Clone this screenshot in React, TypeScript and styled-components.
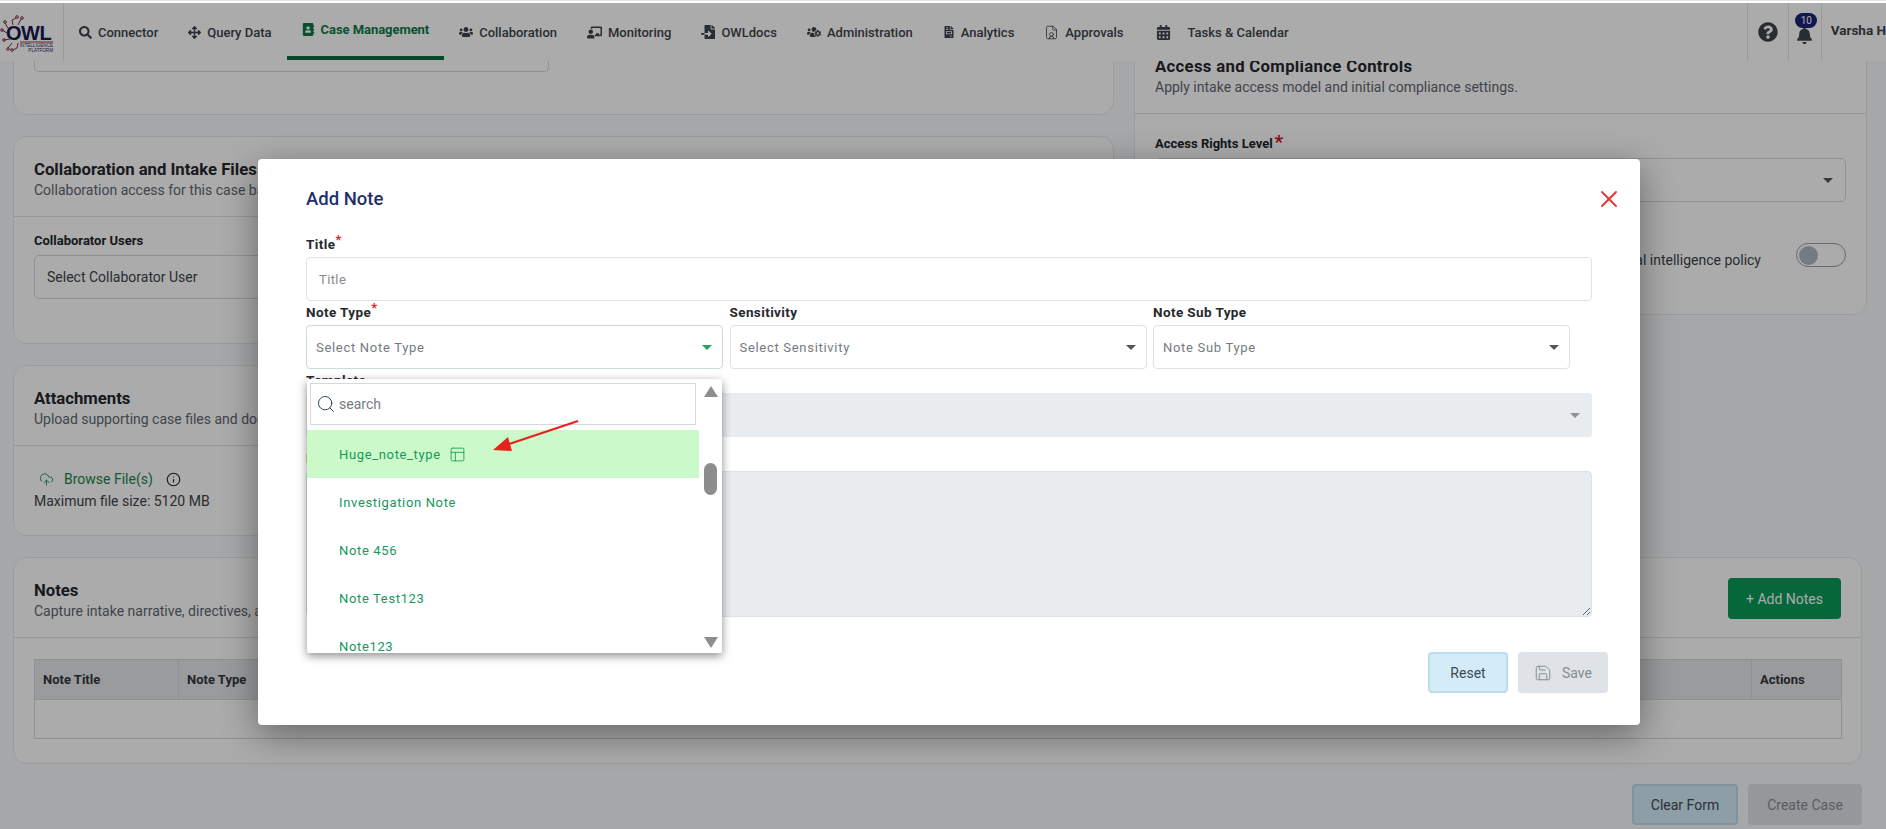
import React from "react";
import styled, { createGlobalStyle } from "styled-components";
import {
  FaAddressBook,
  FaArrowsAlt,
  FaBell,
  FaCalendarAlt,
  FaChalkboardTeacher,
  FaFileImport,
  FaFileInvoice,
  FaQuestionCircle,
  FaSearch,
  FaUsers,
  FaUsersCog,
} from "react-icons/fa";
import { CloudUpload, FileUser, Info, PanelsTopLeft, Save, Search, X } from "lucide-react";

const NAV_ITEMS = [
  { label: "Connector", icon: <FaSearch size={13} /> },
  { label: "Query Data", icon: <FaArrowsAlt size={13} /> },
  { label: "Case Management", icon: <FaAddressBook size={13} />, active: true },
  { label: "Collaboration", icon: <FaUsers size={14} /> },
  { label: "Monitoring", icon: <FaChalkboardTeacher size={15} /> },
  { label: "OWLdocs", icon: <FaFileImport size={14} /> },
  { label: "Administration", icon: <FaUsersCog size={14} /> },
  { label: "Analytics", icon: <FaFileInvoice size={12} /> },
  { label: "Approvals", icon: <FileUser size={15} strokeWidth={1.3} /> },
  { label: "Tasks & Calendar", icon: <FaCalendarAlt size={15} />, wide: true },
];

const NOTE_TYPES = ["Huge_note_type", "Investigation Note", "Note 456", "Note Test123", "Note123"];

const Logo = () => (
  <svg width="62" height="58" viewBox="0 0 62 58" aria-label="OWL Intelligence Platform">
    <g fill="none" stroke="#7a2b46" strokeWidth="1">
      <path d="M7 30 L2 27 M8 25 L5 20 M13 22 L12 17 L16 15 M18 22 L21 16 M10 36 L4 37 M12 40 L8 45 M18 40 L17 45 L13 47" />
      <circle cx="2" cy="27" r="1.3" />
      <circle cx="5" cy="19" r="1.3" />
      <circle cx="17" cy="14" r="1.3" />
      <circle cx="22" cy="15" r="1.3" />
      <circle cx="4" cy="37" r="1.3" />
      <circle cx="8" cy="46" r="1.3" />
      <circle cx="12" cy="47" r="1.3" />
    </g>
    <text x="6" y="37" fontFamily="Liberation Sans, sans-serif" fontWeight="700" fontSize="20" fill="#15194f" letterSpacing="-0.5">
      OWL
    </text>
    <path d="M20 39 H53" stroke="#a3344a" strokeWidth="1" />
    <text x="53" y="44" textAnchor="end" fontFamily="Liberation Sans, sans-serif" fontSize="4.6" fill="#2a2d5c">
      INTELLIGENCE
    </text>
    <text x="53" y="49" textAnchor="end" fontFamily="Liberation Sans, sans-serif" fontSize="4.6" fill="#2a2d5c">
      PLATFORM
    </text>
  </svg>
);

const App: React.FC = () => {
  return (
    <Page>
      <GlobalStyle />
      <TopStrip />
      <Header>
        <LogoCell>
          <Logo />
        </LogoCell>
        <Nav>
          {NAV_ITEMS.map((item) => (
            <NavItem key={item.label} $active={item.active} $wide={item.wide}>
              {item.icon}
              <span>{item.label}</span>
            </NavItem>
          ))}
        </Nav>
        <HeaderRight>
          <HelpCell>
            <FaQuestionCircle size={20} />
          </HelpCell>
          <BellCell>
            <FaBell size={17} />
            <Badge>10</Badge>
          </BellCell>
          <UserName>Varsha H</UserName>
        </HeaderRight>
      </Header>

      <Main>
        <Columns>
          <LeftStack>
            <TopCard>
              <ClippedField />
            </TopCard>
            <Card>
              <CardHead>
                <div>
                  <CardTitle>Collaboration and Intake Files</CardTitle>
                  <CardSub>Collaboration access for this case based on selected users.</CardSub>
                </div>
              </CardHead>
              <CollabBody>
                <FieldLabel>Collaborator Users</FieldLabel>
                <PageSelect>Select Collaborator User</PageSelect>
              </CollabBody>
            </Card>
            <Card>
              <CardHead>
                <div>
                  <CardTitle>Attachments</CardTitle>
                  <CardSub>Upload supporting case files and documents.</CardSub>
                </div>
              </CardHead>
              <AttachBody>
                <BrowseRow>
                  <CloudUpload size={15} strokeWidth={1.4} />
                  <span>Browse File(s)</span>
                  <InfoIcon>
                    <Info size={15} strokeWidth={1.8} />
                  </InfoIcon>
                </BrowseRow>
                <FileNote>Maximum file size: 5120 MB</FileNote>
              </AttachBody>
            </Card>
          </LeftStack>

          <RightCard>
            <CardHead>
              <div>
                <CardTitle $spacing={0.33}>Access and Compliance Controls</CardTitle>
                <CardSub>Apply intake access model and initial compliance settings.</CardSub>
              </div>
            </CardHead>
            <RightBody>
              <AccessLabel>
                Access Rights Level<BigStar>*</BigStar>
              </AccessLabel>
              <PageSelect>
                <span />
                <Caret />
              </PageSelect>
              <ToggleRow>
                <PolicyText>Apply operational intelligence policy</PolicyText>
                <Toggle>
                  <Knob />
                </Toggle>
              </ToggleRow>
            </RightBody>
          </RightCard>

          <NotesCard>
            <CardHead>
              <div>
                <CardTitle>Notes</CardTitle>
                <CardSub>Capture intake narrative, directives, and supporting notes.</CardSub>
              </div>
              <AddButton>+ Add Notes</AddButton>
            </CardHead>
            <NotesBody>
              <NotesTable>
                <thead>
                  <tr>
                    <Th $w={144}>Note Title</Th>
                    <Th>Note Type</Th>
                    <Th $w={90}>Actions</Th>
                  </tr>
                </thead>
                <tbody>
                  <tr>
                    <Td colSpan={3} />
                  </tr>
                </tbody>
              </NotesTable>
            </NotesBody>
          </NotesCard>
        </Columns>
        <PageActions>
          <ResetButton $width={106}>Clear Form</ResetButton>
          <MutedButton $width={114}>Create Case</MutedButton>
        </PageActions>
      </Main>

      <Overlay>
        <Modal>
          <ModalHead>
            <ModalTitle>Add Note</ModalTitle>
            <CloseButton>
              <X size={28} strokeWidth={1.6} />
            </CloseButton>
          </ModalHead>

          <Label $top={27}>
            Title<Star>*</Star>
          </Label>
          <TextInput placeholder="Title" />

          <SelectGrid>
            <Field>
              <Label>
                Note Type<Star>*</Star>
              </Label>
              <SelectBox $open>
                <span>Select Note Type</span>
                <Caret $color="#22a35f" />
              </SelectBox>
              <Dropdown>
                <DropdownList>
                  <SearchBox>
                    <Search size={20} strokeWidth={1.2} color="#2a4a5a" />
                    <span>search</span>
                  </SearchBox>
                  {NOTE_TYPES.map((name, i) => (
                    <Option key={name} $selected={i === 0}>
                      {name}
                      {i === 0 && <PanelsTopLeft size={17} strokeWidth={1.2} />}
                    </Option>
                  ))}
                </DropdownList>
                <ScrollRail>
                  <ArrowUp />
                  <Thumb />
                  <ArrowDown />
                </ScrollRail>
              </Dropdown>
            </Field>
            <Field>
              <Label>Sensitivity</Label>
              <SelectBox>
                <span>Select Sensitivity</span>
                <Caret $color="#555" />
              </SelectBox>
            </Field>
            <Field>
              <Label>Note Sub Type</Label>
              <SelectBox>
                <span>Note Sub Type</span>
                <Caret $color="#555" />
              </SelectBox>
            </Field>
          </SelectGrid>

          <Label $top={3}>Template</Label>
          <DisabledSelect>
            <Caret $color="#8b9096" />
          </DisabledSelect>

          <Label $top={13}>Description</Label>
          <NoteArea disabled />

          <ModalActions>
            <ResetButton $width={80}>Reset</ResetButton>
            <MutedButton $width={90}>
              <Save size={18} strokeWidth={1.3} />
              Save
            </MutedButton>
          </ModalActions>

          <PointerArrow width="100" height="40" viewBox="0 0 100 40">
            <path d="M92 3 L20 27" stroke="#e8211d" strokeWidth="2.2" />
            <path d="M7 32 L22 19 L26 33 Z" fill="#e8211d" />
          </PointerArrow>
        </Modal>
      </Overlay>
    </Page>
  );
};

const GlobalStyle = createGlobalStyle`
  html, body {
    margin: 0;
    padding: 0;
    height: 100%;
    overflow: hidden;
    background: #f8f9fb;
  }
  * {
    box-sizing: border-box;
  }
  body {
    font-family: Roboto, "Noto Sans", sans-serif;
    color: #212529;
  }
`;

const Page = styled.div`
  width: 1886px;
  height: 829px;
  overflow: hidden;
  position: relative;
`;

const TopStrip = styled.div`
  height: 3px;
  background: #fff;
  border-top: 1px solid #e3e3e3;
`;

const Header = styled.header`
  position: relative;
  z-index: 2;
  display: flex;
  height: 58px;
  background: #fff;
`;

const LogoCell = styled.div`
  width: 64px;
  flex: none;
  border-right: 1px solid #e4e4e4;
`;

const Nav = styled.nav`
  display: flex;
`;

const NavItem = styled.a<{ $active?: boolean; $wide?: boolean }>`
  display: flex;
  align-items: center;
  gap: ${(p) => (p.$wide ? "17px" : "6px")};
  padding: 0 15px;
  margin-left: ${(p) => (p.$wide ? "2px" : "0")};
  font-size: 13px;
  white-space: nowrap;
  color: ${(p) => (p.$active ? "#0b7a47" : "#3d4349")};
  border-bottom: ${(p) => (p.$active ? "4px solid #0b6b3f" : "0")};
  height: ${(p) => (p.$active ? "57px" : "58px")};
  font-weight: ${(p) => (p.$active ? 700 : 500)};
  letter-spacing: ${(p) => (p.$active ? "-0.05px" : "0")};
`;

const HeaderRight = styled.div`
  position: absolute;
  right: 0;
  top: 0;
  height: 100%;
  width: 139px;
  display: flex;
  color: #3d4349;
`;

const HelpCell = styled.div`
  width: 42px;
  display: flex;
  align-items: center;
  justify-content: center;
  border-left: 1px solid #e4e4e4;
`;

const BellCell = styled.div`
  position: relative;
  width: 34px;
  display: flex;
  align-items: center;
  justify-content: center;
  padding-top: 6px;
  border-left: 1px solid #e4e4e4;
  border-right: 1px solid #e4e4e4;
`;

const Badge = styled.span`
  position: absolute;
  top: 10px;
  left: 6px;
  width: 22px;
  height: 15px;
  border-radius: 8px;
  background: #1a2478;
  color: #fff;
  font-size: 10px;
  text-align: center;
  line-height: 15px;
`;

const UserName = styled.div`
  padding: 0 0 4px 9px;
  display: flex;
  align-items: center;
  font-size: 13.5px;
  font-weight: 700;
  white-space: nowrap;
`;

const Main = styled.main`
  margin-top: -28px;
  padding-left: 13px;
`;

const Columns = styled.div`
  display: grid;
  grid-template-columns: 1101px 733px;
  column-gap: 20px;
  row-gap: 21px;
  align-items: start;
`;

const LeftStack = styled.div`
  display: flex;
  flex-direction: column;
  gap: 21px;
`;

const Card = styled.section`
  background: #fff;
  border: 1px solid #e7e9ec;
  border-radius: 14px;
`;

const TopCard = styled(Card)`
  height: 82px;
  padding: 0 20px;
`;

const ClippedField = styled.div`
  width: 515px;
  height: 38px;
  border: 1px solid #d4d7da;
  border-top: 0;
  border-radius: 0 0 5px 5px;
`;

const RightCard = styled(Card)`
  height: 282px;
  border-radius: 0 0 14px 14px;
`;

const CardHead = styled.div`
  min-height: 80px;
  padding: 23px 20px 15px;
  display: flex;
  justify-content: space-between;
  align-items: flex-start;
  border-bottom: 1px solid #dfe2e5;
`;

const CardTitle = styled.div<{ $spacing?: number }>`
  font-size: 16.7px;
  font-weight: 700;
  line-height: 20px;
  letter-spacing: ${(p) => p.$spacing ?? 0}px;
  color: #24282d;
`;

const CardSub = styled.div`
  font-size: 14px;
  line-height: 20px;
  color: #5f6770;
`;

const CollabBody = styled.div`
  height: 126px;
  padding: 16px 20px 0;
`;

const FieldLabel = styled.div`
  font-size: 13px;
  font-weight: 700;
  line-height: 16px;
  margin-bottom: 6px;
`;

const PageSelect = styled.div`
  height: 44px;
  padding: 0 12px;
  border: 1px solid #d4d7da;
  border-radius: 5px;
  display: flex;
  align-items: center;
  justify-content: space-between;
  font-size: 14px;
  color: #3d4349;
`;

const AttachBody = styled.div`
  height: 89px;
  padding: 22px 20px 0;
  font-size: 14px;
  line-height: 22px;
`;

const BrowseRow = styled.div`
  display: flex;
  align-items: center;
  gap: 10px;
  padding-left: 5px;
  color: #19844f;
`;

const InfoIcon = styled.span`
  display: flex;
  margin-left: 3px;
  color: #24282d;
`;

const FileNote = styled.div`
  color: #3d4349;
`;

const RightBody = styled.div`
  padding: 21px 20px 0;
`;

const AccessLabel = styled.div`
  font-size: 13px;
  font-weight: 700;
  line-height: 18px;
  margin-bottom: 5px;
`;

const BigStar = styled.span`
  margin-left: 2px;
  color: #d20f0f;
  font-size: 19px;
  line-height: 10px;
`;

const ToggleRow = styled.div`
  display: flex;
  justify-content: flex-end;
  gap: 35px;
  margin-top: 41px;
`;

const PolicyText = styled.div`
  padding-top: 7px;
  font-size: 14px;
  line-height: 20px;
  color: #3d4349;
`;

const Toggle = styled.div`
  width: 50px;
  height: 24px;
  padding: 2px;
  border: 1px solid #9aa0a6;
  border-radius: 12px;
  background: #fff;
`;

const Knob = styled.div`
  width: 19px;
  height: 19px;
  border-radius: 50%;
  background: #b0b8c4;
`;

const NotesCard = styled(Card)`
  grid-column: 1 / -1;
  width: 1849px;
`;

const AddButton = styled.button`
  width: 113px;
  height: 41px;
  margin-top: -3px;
  border: 0;
  border-radius: 4px;
  background: #0a9a57;
  color: #fff;
  font-family: inherit;
  font-size: 14px;
`;

const NotesBody = styled.div`
  height: 125px;
  padding: 21px 19px 0 20px;
`;

const NotesTable = styled.table`
  width: 100%;
  height: 80px;
  border-collapse: collapse;
  table-layout: fixed;
  border: 1px solid #d4d7da;
`;

const Th = styled.th<{ $w?: number }>`
  height: 40px;
  width: ${(p) => (p.$w ? `${p.$w}px` : "auto")};
  padding: 0 8px;
  border-right: 1px solid #d4d7da;
  border-bottom: 1px solid #d4d7da;
  background: #e6e7ea;
  color: #33383d;
  font-size: 13px;
  font-weight: 700;
  text-align: left;
`;

const Td = styled.td`
  height: 39px;
`;

const PageActions = styled.div`
  display: flex;
  justify-content: flex-end;
  gap: 10px;
  margin-top: 20px;
  padding-right: 24px;
`;

const ActionButton = styled.button<{ $width: number }>`
  width: ${(p) => p.$width}px;
  height: 41px;
  display: flex;
  align-items: center;
  justify-content: center;
  gap: 10px;
  border-radius: 4px;
  font-family: inherit;
  font-size: 14px;
`;

const ResetButton = styled(ActionButton)`
  background: #d3ecf8;
  border: 2px solid #bddcec;
  color: #3e4a53;
`;

const MutedButton = styled(ActionButton)`
  background: #dfe2e6;
  border: 0;
  color: #868c92;
`;

const Overlay = styled.div`
  position: absolute;
  inset: 3px 0 0 0;
  z-index: 5;
  padding: 156px 0 0 258px;
  background: rgba(0, 0, 0, 0.33);
`;

const Modal = styled.div`
  position: relative;
  width: 1382px;
  height: 566px;
  padding: 30px 48px 0;
  background: #fff;
  border-radius: 4px;
  box-shadow: 0 10px 36px rgba(0, 0, 0, 0.4);
`;

const ModalHead = styled.div`
  display: flex;
  justify-content: space-between;
  align-items: center;
  height: 20px;
  margin-right: -31px;
`;

const ModalTitle = styled.h2`
  margin: 0;
  font-size: 18.5px;
  font-weight: 500;
  color: #1f2f6b;
`;

const CloseButton = styled.span`
  display: flex;
  color: #e53535;
`;

const Label = styled.div<{ $top?: number }>`
  margin-top: ${(p) => p.$top ?? 0}px;
  margin-bottom: 5px;
  height: 16px;
  font-size: 13.5px;
  font-weight: 700;
  line-height: 16px;
  letter-spacing: 0.4px;
  color: #25292e;
`;

const Star = styled.sup`
  color: #e81c1c;
  font-size: 13px;
  line-height: 0;
`;

const TextInput = styled.input`
  display: block;
  width: 100%;
  height: 44px;
  padding: 0 12px;
  border: 1px solid #dee2e6;
  border-radius: 4px;
  outline: 0;
  font-family: inherit;
  font-size: 13px;
  letter-spacing: 0.4px;
  &::placeholder {
    color: #858a8f;
  }
`;

const SelectGrid = styled.div`
  display: grid;
  grid-template-columns: repeat(3, 417px);
  column-gap: 6.5px;
  margin-top: 3px;
`;

const Field = styled.div`
  position: relative;
`;

const SelectBox = styled.div<{ $open?: boolean }>`
  height: 44px;
  padding: 0 10px 0 9px;
  display: flex;
  align-items: center;
  justify-content: space-between;
  border: 1px solid ${(p) => (p.$open ? "#c9dcd7" : "#dee2e6")};
  border-radius: 4px;
  font-size: 13px;
  letter-spacing: 0.7px;
  color: #757b80;
`;

const Caret = styled.i<{ $color?: string }>`
  width: 0;
  height: 0;
  border-left: 5px solid transparent;
  border-right: 5px solid transparent;
  border-top: 5px solid ${(p) => p.$color ?? "#555"};
`;

const Dropdown = styled.div`
  position: absolute;
  z-index: 3;
  top: 75px;
  left: 1px;
  width: 415px;
  height: 274px;
  display: flex;
  overflow: hidden;
  background: #fff;
  border-radius: 2px;
  box-shadow: 0 3px 10px rgba(0, 0, 0, 0.45);
`;

const DropdownList = styled.div`
  width: 392px;
  padding-top: 4px;
`;

const SearchBox = styled.div`
  width: 386px;
  height: 42px;
  margin: 0 0 5px 3px;
  padding-left: 5px;
  display: flex;
  align-items: center;
  gap: 3px;
  border: 1px solid #d6d9dc;
  font-size: 14px;
  color: #757b80;
`;

const Option = styled.div<{ $selected?: boolean }>`
  height: 48px;
  padding-left: 32px;
  display: flex;
  align-items: center;
  gap: 8px;
  font-size: 13px;
  letter-spacing: 0.65px;
  color: #17985c;
  background: ${(p) => (p.$selected ? "#ccf9c9" : "transparent")};
`;

const ScrollRail = styled.div`
  flex: 1;
  padding: 7px 0 5px;
  display: flex;
  flex-direction: column;
  align-items: center;
`;

const ArrowUp = styled.i`
  width: 0;
  height: 0;
  border-left: 7px solid transparent;
  border-right: 7px solid transparent;
  border-bottom: 11px solid #8d8d8d;
`;

const Thumb = styled.div`
  width: 13px;
  height: 32px;
  margin-top: 66px;
  border-radius: 7px;
  background: #8d8d8d;
`;

const ArrowDown = styled.i`
  width: 0;
  height: 0;
  margin-top: auto;
  border-left: 7px solid transparent;
  border-right: 7px solid transparent;
  border-top: 11px solid #8d8d8d;
`;

const DisabledSelect = styled.div`
  height: 44px;
  padding: 0 12px;
  display: flex;
  align-items: center;
  justify-content: flex-end;
  background: #e9ecef;
  border-radius: 4px;
`;

const NoteArea = styled.textarea`
  display: block;
  width: 100%;
  height: 146px;
  border: 1px solid #dee2e6;
  border-radius: 4px;
  background: #e9ecef;
`;

const ModalActions = styled.div`
  display: flex;
  justify-content: flex-end;
  gap: 10px;
  margin: 35px -16px 0 0;
`;

const PointerArrow = styled.svg`
  position: absolute;
  z-index: 4;
  left: 228px;
  top: 259px;
`;

export default App;
